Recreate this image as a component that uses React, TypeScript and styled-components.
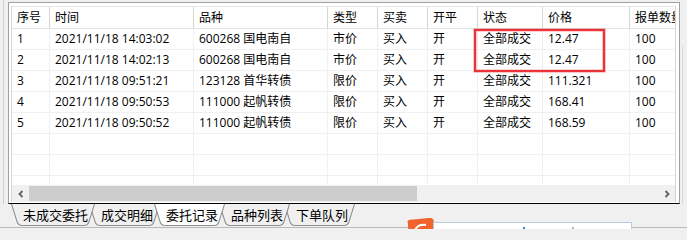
import React from "react";
import styled, { createGlobalStyle } from "styled-components";

const Global = createGlobalStyle`
  html, body { margin: 0; padding: 0; }
  body {
    background: #f0f0f0;
    font-family: "Open Sans", "Noto Sans CJK SC", sans-serif;
    color: #000;
  }
`;

const Page = styled.div`
  position: relative;
  width: 687px;
  height: 229px;
  overflow: hidden;
  background: #f0f0f0;
  display: flex;
  flex-direction: column;
`;

const TopArea = styled.div`
  display: flex;
  height: 204px;
  flex: none;
`;

const LeftStrip = styled.div`
  width: 8px;
  flex: none;
  background: linear-gradient(to right, transparent 3px, #cfcfcf 3px, #cfcfcf 4px, transparent 4px);
`;

const RightStrip = styled.div`
  flex: 1;
  background: linear-gradient(to right, transparent 2px, #dadada 2px, #dadada 3px, transparent 3px) 0 45px / 100% 100% no-repeat;
`;

const Panel = styled.div`
  box-sizing: border-box;
  width: 672px;
  height: 202px;
  margin-top: 2px;
  border: 1px solid #a0a0a0;
  border-bottom-color: #000;
  background: #fff;
  padding: 3px 3px 1px 2px;
  display: flex;
`;

const Inner = styled.div`
  flex: 1;
  border-top: 1px solid #e6e6e6;
  border-left: 1px solid #d5d5d5;
  border-right: 1px solid #d5d5d5;
  display: flex;
  flex-direction: column;
  min-width: 0;
`;

const GridArea = styled.div`
  height: 178px;
  overflow: hidden;
  flex: none;
`;

const cols = "38px 144px 134px 50px 50px 50px 65px 87px 110px";

const HeaderRow = styled.div`
  display: grid;
  grid-template-columns: ${cols};
  height: 22px;
  box-sizing: border-box;
  border-bottom: 1px solid #e3e3e3;
`;

const HeaderCell = styled.div`
  box-sizing: border-box;
  padding-left: 5px;
  font-size: 12px;
  line-height: 21px;
  white-space: nowrap;
  overflow: hidden;
  border-right: 1px solid #d6d6d6;
`;

const Row = styled.div`
  display: grid;
  grid-template-columns: ${cols};
  height: 21px;
  box-sizing: border-box;
  border-bottom: 1px solid #f0f0f0;
`;

const Cell = styled.div`
  box-sizing: border-box;
  padding-left: 5px;
  font-size: 12px;
  line-height: 20px;
  white-space: nowrap;
  overflow: hidden;
  border-right: 1px solid #f0f0f0;
`;

const ScrollBar = styled.div`
  height: 17px;
  flex: none;
  display: flex;
  background: #f0f0f0;
`;

const ScrollButton = styled.div`
  width: 17px;
  flex: none;
  display: flex;
  align-items: center;
  justify-content: center;
`;

const ScrollTrack = styled.div`
  flex: 1;
  display: flex;
  align-items: center;
`;

const ScrollThumb = styled.div`
  width: 388px;
  height: 15px;
  background: #cdcdcd;
`;

const TabBar = styled.div`
  display: flex;
  height: 23px;
  flex: none;
  padding-left: 11px;
`;

const TabItem = styled.div<{ $active?: boolean; $z: number }>`
  position: relative;
  z-index: ${(p) => p.$z};
  height: 22px;
  padding: 0 7px 0 12px;
  margin-left: -6px;
  font-size: 13px;
  line-height: 22px;
  white-space: nowrap;
  &:first-child { margin-left: 0; }
`;

const TabShape = styled.svg`
  position: absolute;
  left: 0;
  top: 0;
  width: 100%;
  height: 22px;
  z-index: -1;
  overflow: visible;
`;

const TabLabel = styled.span`
  position: relative;
`;

const BottomBar = styled.div`
  flex: 1;
  border-top: 1px solid #b9b9b9;
  background: #f0f0f0;
`;

const Highlight = styled.div`
  position: absolute;
  left: 474px;
  top: 29px;
  width: 131px;
  height: 43px;
  box-sizing: border-box;
  border: 2px solid #ea3437;
  box-shadow: 0 0 0 0.6px rgba(234, 52, 55, 0.45), inset 0 0 0 0.6px rgba(234, 52, 55, 0.45);
  pointer-events: none;
`;

const PeekBox = styled.div`
  position: absolute;
  left: 433px;
  top: 222px;
  width: 199px;
  height: 12px;
  box-sizing: border-box;
  background: #fff;
  border: 1px solid #b7cbe3;
`;

const PeekDot = styled.div<{ $x: number; $c: string }>`
  position: absolute;
  left: ${(p) => p.$x}px;
  top: 4px;
  width: 2px;
  height: 3px;
  background: ${(p) => p.$c};
`;

const OrangeIcon = styled.svg`
  position: absolute;
  left: 406px;
  top: 218px;
  width: 30px;
  height: 14px;
`;

const headers = ["序号", "时间", "品种", "类型", "买卖", "开平", "状态", "价格", "报单数量"];

const rows = [
  ["1", "2021/11/18 14:03:02", "600268 国电南自", "市价", "买入", "开", "全部成交", "12.47", "100"],
  ["2", "2021/11/18 14:02:13", "600268 国电南自", "市价", "买入", "开", "全部成交", "12.47", "100"],
  ["3", "2021/11/18 09:51:21", "123128 首华转债", "限价", "买入", "开", "全部成交", "111.321", "100"],
  ["4", "2021/11/18 09:50:53", "111000 起帆转债", "限价", "买入", "开", "全部成交", "168.41", "100"],
  ["5", "2021/11/18 09:50:52", "111000 起帆转债", "限价", "买入", "开", "全部成交", "168.59", "100"],
];

const tabs = ["未成交委托", "成交明细", "委托记录", "品种列表", "下单队列"];
const activeTab = 2;

function Tab({ label, index }: { label: string; index: number }) {
  const active = index === activeTab;
  const ref = React.useRef<HTMLDivElement>(null);
  const [w, setW] = React.useState(label.length * 13 + 19);
  React.useLayoutEffect(() => {
    if (ref.current) setW(ref.current.offsetWidth);
  }, []);
  const H = 21.5;
  const S = 6;
  const d = `M0.5,0 L${S},${H - 4} Q${S + 1.2},${H} ${S + 5},${H} L${w - S - 5},${H} Q${w - S - 1.2},${H} ${w - S},${H - 4} L${w - 0.5},0`;
  return (
    <TabItem ref={ref} $active={active} $z={active ? 20 : 10 - index}>
      <TabShape viewBox={`0 0 ${w} 22`} preserveAspectRatio="none">
        <path d={d} fill={active ? "#ffffff" : "#f0f0f0"} stroke="#8e8e8e" strokeWidth="1" />
      </TabShape>
      <TabLabel>{label}</TabLabel>
    </TabItem>
  );
}

export default function App() {
  return (
    <>
      <Global />
      <Page>
        <TopArea>
          <LeftStrip />
          <Panel>
            <Inner>
              <GridArea>
                <HeaderRow>
                  {headers.map((h) => (
                    <HeaderCell key={h}>{h}</HeaderCell>
                  ))}
                </HeaderRow>
                {rows.map((r, i) => (
                  <Row key={i}>
                    {r.map((c, j) => (
                      <Cell key={j}>{c}</Cell>
                    ))}
                  </Row>
                ))}
                {Array.from({ length: 4 }).map((_, i) => (
                  <Row key={"e" + i}>
                    {headers.map((h) => (
                      <Cell key={h} />
                    ))}
                  </Row>
                ))}
              </GridArea>
              <ScrollBar>
                <ScrollButton>
                  <svg width="8" height="8" viewBox="0 0 8 8">
                    <polyline points="5.5,1 2.5,4 5.5,7" fill="none" stroke="#606060" strokeWidth="1.8" />
                  </svg>
                </ScrollButton>
                <ScrollTrack>
                  <ScrollThumb />
                </ScrollTrack>
                <ScrollButton>
                  <svg width="8" height="8" viewBox="0 0 8 8">
                    <polyline points="2.5,1 5.5,4 2.5,7" fill="none" stroke="#606060" strokeWidth="1.8" />
                  </svg>
                </ScrollButton>
              </ScrollBar>
            </Inner>
          </Panel>
          <RightStrip />
        </TopArea>
        <TabBar>
          {tabs.map((t, i) => (
            <Tab key={t} label={t} index={i} />
          ))}
        </TabBar>
        <BottomBar />
        <Highlight />
        <OrangeIcon viewBox="0 0 30 14">
          <path d="M2,4 Q1,1 5,1 L24,0.5 Q28,0.5 28,4 L28,14 L2,14 Z" fill="#f2642d" transform="rotate(-4 15 7)" />
          <path d="M9,12 Q12,6 20,7" fill="none" stroke="#fff" strokeWidth="2" />
        </OrangeIcon>
        <PeekBox>
          <PeekDot $x={89} $c="#2f8be0" />
          <PeekDot $x={138} $c="#b8b8b8" />
        </PeekBox>
      </Page>
    </>
  );
}
